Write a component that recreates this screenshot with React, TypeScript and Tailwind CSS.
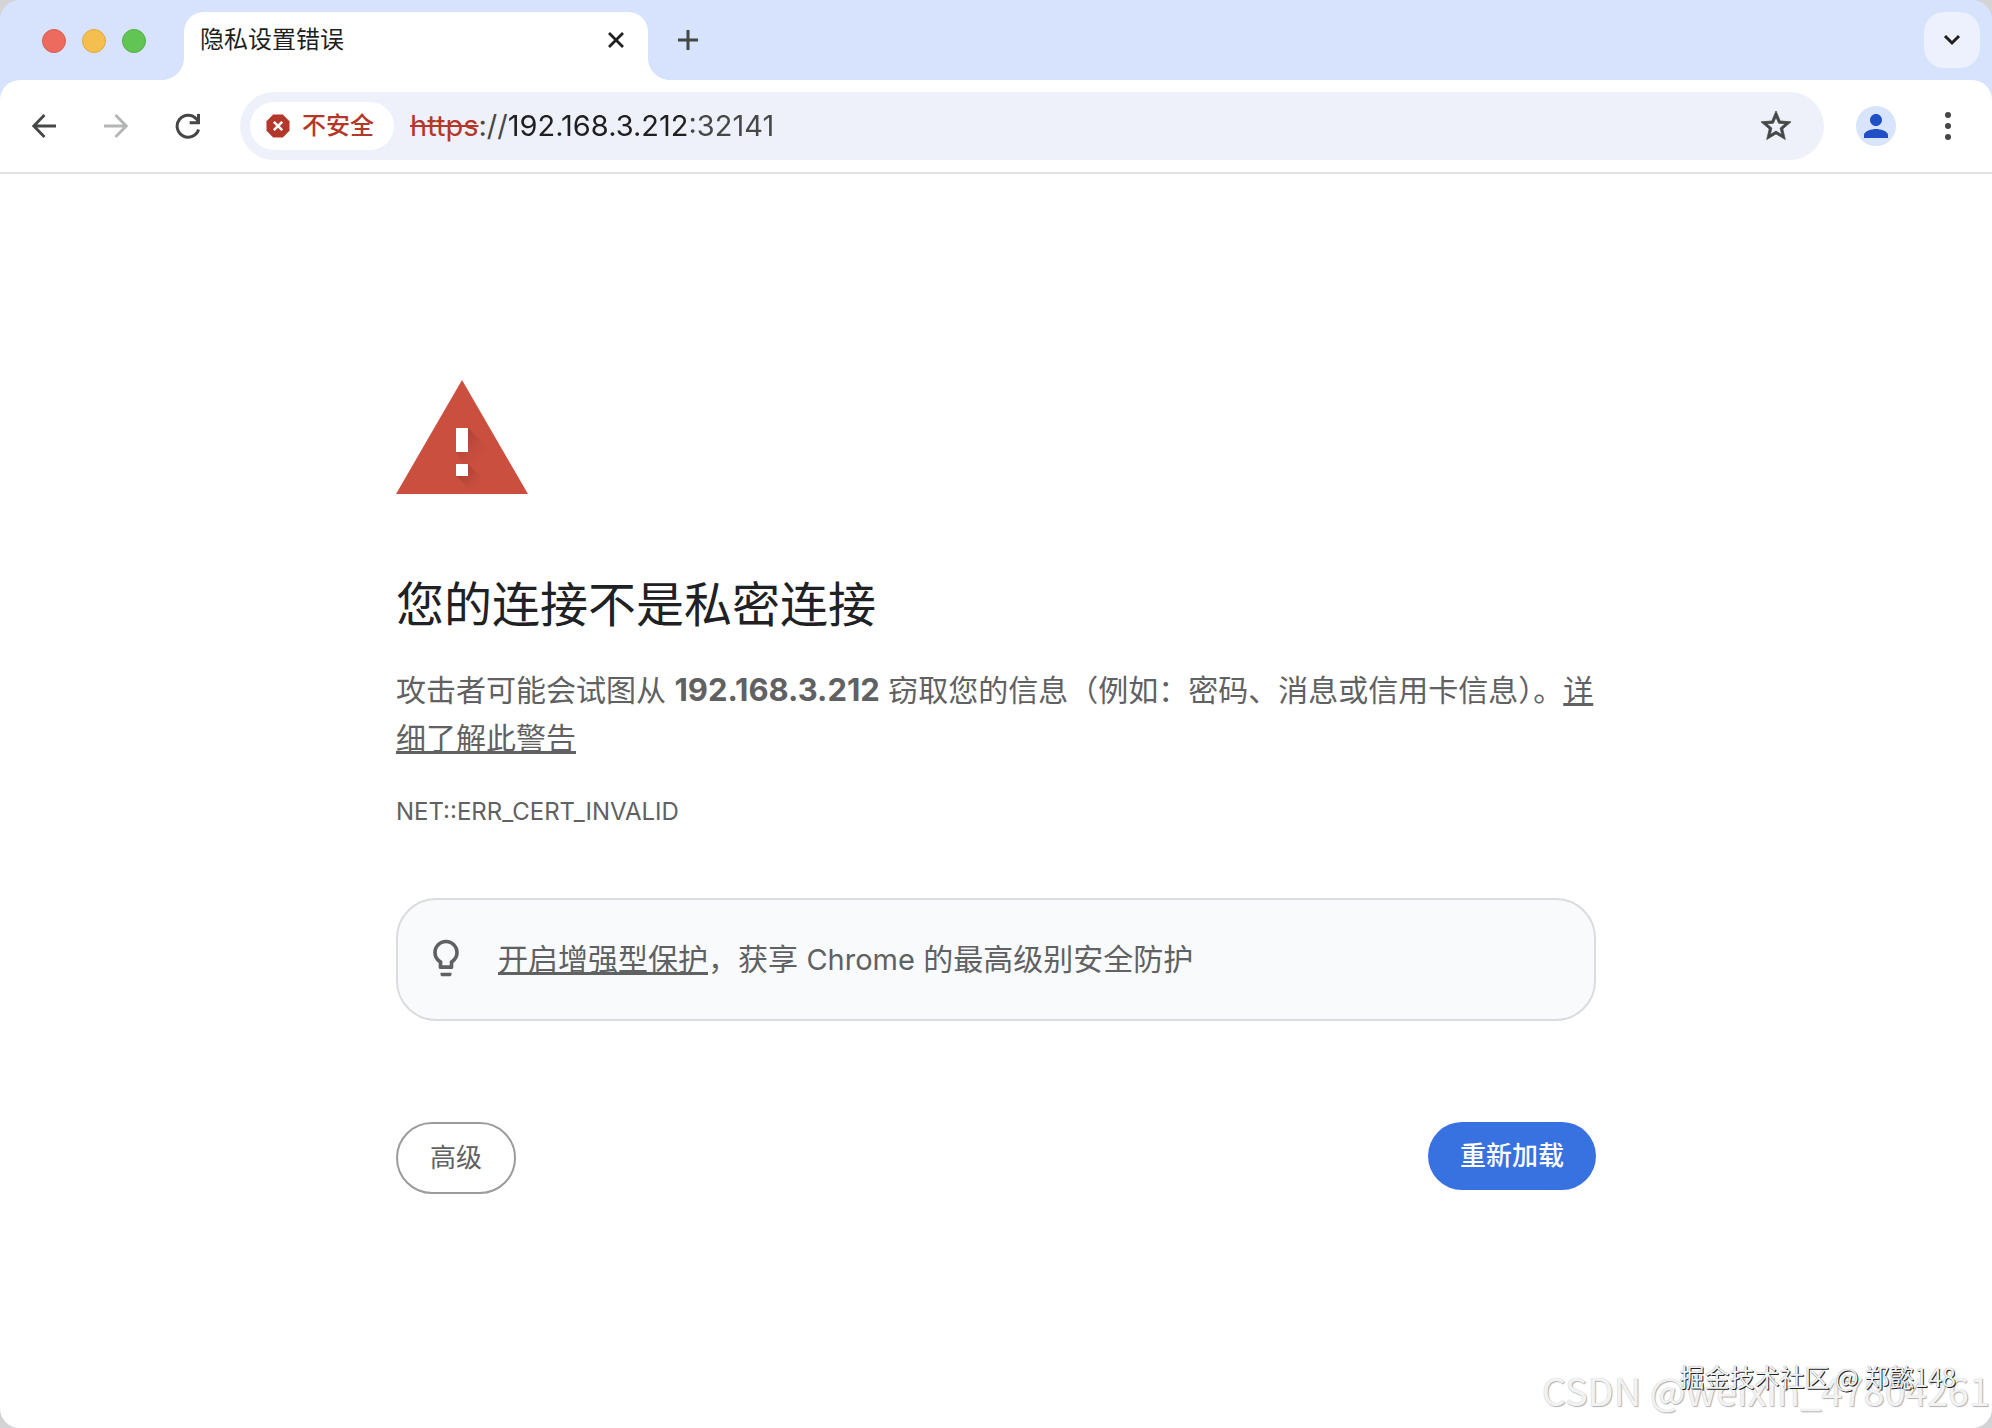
import { useState } from "react";
import type { ReactNode } from "react";
import { MdLightbulbOutline, MdPerson, MdStarOutline } from "react-icons/md";

function TabStrip() {
  return (
    <div className="flex h-20 items-end">
      <div className="flex h-full w-[162px] items-center gap-4 pt-0.5 pl-[42px]">
        <button aria-label="关闭窗口" className="size-6 rounded-full border border-[#d95b50] bg-[#ec6a5e]" />
        <button aria-label="最小化" className="size-6 rounded-full border border-[#dfa93f] bg-[#f4bf4f]" />
        <button aria-label="全屏" className="size-6 rounded-full border border-[#52b043] bg-[#61c554]" />
      </div>

      <div className="flex items-end">
        <TabFoot />
        <div className="flex h-[68px] w-[464px] items-start justify-between rounded-t-[20px] bg-white pt-2 pr-5 pl-4">
          <span className="text-2xl leading-10 text-[#1f1f1f]">隐私设置错误</span>
          <button aria-label="关闭标签页" className="flex h-10 w-6 items-center justify-center">
            <svg viewBox="0 0 16 16" className="size-4" stroke="#1f1f1f" strokeWidth="2.8">
              <path d="M1 1l14 14M15 1L1 15" />
            </svg>
          </button>
        </div>
        <TabFoot flip />
      </div>

      <button aria-label="新标签页" className="flex h-20 w-9 items-center justify-center">
        <svg viewBox="0 0 20 20" className="size-5" stroke="#444746" strokeWidth="3">
          <path d="M10 0v20M0 10h20" />
        </svg>
      </button>

      <button
        aria-label="搜索标签页"
        className="mr-3 mb-3 ml-auto flex size-14 items-center justify-center rounded-[20px] bg-[#ecf1fd]"
      >
        <svg viewBox="0 0 18 12" className="h-3 w-[18px]" fill="none" stroke="#1f1f1f" strokeWidth="3">
          <path d="M2 2l7 7 7-7" />
        </svg>
      </button>
    </div>
  );
}

function TabFoot({ flip = false }: { flip?: boolean }) {
  return (
    <svg viewBox="0 0 22 22" className="size-[22px]" fill="#fff">
      <path d={flip ? "M0 0v22h22C10 22 0 12 0 0z" : "M22 0v22H0C12 22 22 12 22 0z"} />
    </svg>
  );
}

function ToolButton({ label, children }: { label: string; children: ReactNode }) {
  return (
    <button aria-label={label} className="flex size-14 items-center justify-center">
      {children}
    </button>
  );
}

function Toolbar() {
  const [address, setAddress] = useState("192.168.3.212:32141");

  return (
    <div className="flex h-[94px] items-center rounded-t-[20px] border-b-2 border-[#e1e3e1] bg-white pl-4">
      <div className="flex gap-4">
        <ToolButton label="返回">
          <svg viewBox="0 0 24 24" className="size-6" fill="none" stroke="#444746" strokeWidth="2.8">
            <path d="M24 12H2M12.500 1L1.800 12l10.700 11" />
          </svg>
        </ToolButton>
        <ToolButton label="前进">
          <svg viewBox="0 0 24 24" className="size-6" fill="none" stroke="#b4b5b5" strokeWidth="2.8">
            <path d="M0 12h22M11.500 1l10.700 11-10.700 11" />
          </svg>
        </ToolButton>
        <ToolButton label="重新加载此页">
          <svg viewBox="0 0 26 26" className="size-[26px]" fill="none" stroke="#444746" strokeWidth="3">
            <path d="M23.600 16.500A11 11 0 1 1 21.500 6L23.500 8.800" />
            <path d="M23.500 1v8.800h-8.800" />
          </svg>
        </ToolButton>
      </div>

      <div className="ml-6 flex h-[68px] flex-1 items-center rounded-full bg-[#eef1f9] pr-4 pl-2.5">
        <button className="flex h-12 items-center gap-3 rounded-full bg-white pr-5 pl-4 text-2xl font-medium text-[#b3372b]">
          <svg viewBox="0 0 24 24" className="size-6">
            <path fill="#b3372b" d="M7.200 0.500h9.600l6.700 6.700v9.600l-6.700 6.700H7.200L.5 16.800V7.200z" />
            <path stroke="#fff" strokeWidth="2.6" d="M7.800 7.800l8.400 8.400M16.200 7.800l-8.400 8.400" />
          </svg>
          不安全
        </button>
        <label htmlFor="address" className="pl-4 text-[29px] text-[#474747]">
          <s className="text-[#b3372b]">https</s>://
        </label>
        {/* host stays dark, the port is dimmed */}
        <input
          id="address"
          value={address}
          onChange={(e) => setAddress(e.target.value)}
          spellCheck={false}
          className="min-w-0 flex-1 bg-[linear-gradient(90deg,#1f1f1f_182px,#474747_182px)] bg-clip-text text-[29px] text-transparent caret-black outline-none"
        />
        <button aria-label="为此标签页添加书签" className="flex size-16 items-center justify-center">
          <MdStarOutline className="size-9 stroke-[#444746] stroke-[0.5] text-[#444746]" />
        </button>
      </div>

      <button
        aria-label="个人资料"
        className="ml-8 flex size-10 items-center justify-center rounded-full bg-[#d8e3fc]"
      >
        <MdPerson className="size-9 text-[#1f4fc4]" />
      </button>
      <button aria-label="更多" className="mr-4 ml-6 flex size-14 items-center justify-center">
        <svg viewBox="0 0 6 28" className="h-7 w-1.5" fill="#444746">
          <circle cx="3" cy="3" r="3" />
          <circle cx="3" cy="14" r="3" />
          <circle cx="3" cy="25" r="3" />
        </svg>
      </button>
    </div>
  );
}

function WarningIcon() {
  return (
    <svg viewBox="0 0 132 114" className="h-[114px] w-[132px]">
      <defs>
        <linearGradient id="shade" gradientUnits="userSpaceOnUse" x1="60" y1="54" x2="84" y2="78">
          <stop offset="0" stopColor="#8e3529" stopOpacity="0.6" />
          <stop offset="1" stopColor="#a84236" stopOpacity="0" />
        </linearGradient>
        <linearGradient id="shade-dot" gradientUnits="userSpaceOnUse" x1="64" y1="88" x2="82" y2="106">
          <stop offset="0" stopColor="#8e3529" stopOpacity="0.7" />
          <stop offset="1" stopColor="#a84236" stopOpacity="0" />
        </linearGradient>
      </defs>
      <path fill="#cb4f3f" d="M66 0l66 114H0z" />
      <path fill="url(#shade)" d="M72 48l26 26v40H84L60 72z" />
      <path fill="url(#shade-dot)" d="M72 84l24 24v6H78L60 96z" />
      <path fill="#fff" d="M60 48h12v24H60zM60 84h12v12H60z" />
    </svg>
  );
}

function Interstitial() {
  return (
    <main className="mx-auto w-full max-w-[1200px] pt-[206px] text-[#5f6162]">
      <WarningIcon />
      <h1 className="mt-20 text-5xl leading-[62px] text-[#202124]">您的连接不是私密连接</h1>
      <p className="mt-[30px] text-[30px] leading-[48px]">
        攻击者可能会试图从 <strong className="text-[31px] font-bold">192.168.3.212</strong>{" "}
        窃取您的信息（例如：密码、消息或信用卡信息）。
        <a href="#learn-more" className="underline">
          详细了解此警告
        </a>
      </p>
      <p className="mt-8 text-2xl leading-9">NET::ERR_CERT_INVALID</p>

      <div className="mt-[68px] flex items-start gap-[30px] rounded-[40px] border-2 border-[#dadce0] bg-[#f8fafc] py-9 pl-[26px]">
        <MdLightbulbOutline className="size-11 text-[#5f6162]" />
        <p className="text-[30px] leading-[46px]">
          <a href="#enhanced-protection" className="underline">
            开启增强型保护
          </a>
          ，获享 <span className="text-[29px]">Chrome</span> 的最高级别安全防护
        </p>
      </div>

      <div className="mt-[101px] flex items-start justify-between">
        <button className="rounded-full border-2 border-[#9a9b9c] px-8 py-4 text-[26px] leading-9">高级</button>
        <button className="rounded-full bg-[#3871e0] px-8 py-4 text-[26px] leading-9 font-medium text-white">
          重新加载
        </button>
      </div>
    </main>
  );
}

export default function App() {
  return (
    <div
      lang="zh-CN"
      className="relative min-h-screen bg-[#d4d4d6] font-['Inter','Noto_Sans_CJK_SC',sans-serif]"
    >
      <div className="flex min-h-screen flex-col overflow-hidden rounded-[20px] bg-[#d7e2fc]">
        <TabStrip />
        <Toolbar />
        <div className="flex-1 bg-white pb-20">
          <Interstitial />
        </div>
      </div>

      <span className="absolute right-0.5 bottom-[18px] font-['Noto_Sans_CJK_SC',sans-serif] text-[38px] leading-10 text-[#f2f2f2] [text-shadow:1px_1px_1px_#b0b0b0,0_0_1px_#c8c8c8]">
        CSDN @weixin_47804261
      </span>
      <span className="absolute right-9 bottom-[34px] font-['Noto_Sans_CJK_SC',sans-serif] text-[25px] leading-9 text-[#f2f2f2] [text-shadow:1px_1px_0_#222,0_0_1px_#888]">
        掘金技术社区 @ 郑懿148
      </span>
    </div>
  );
}
